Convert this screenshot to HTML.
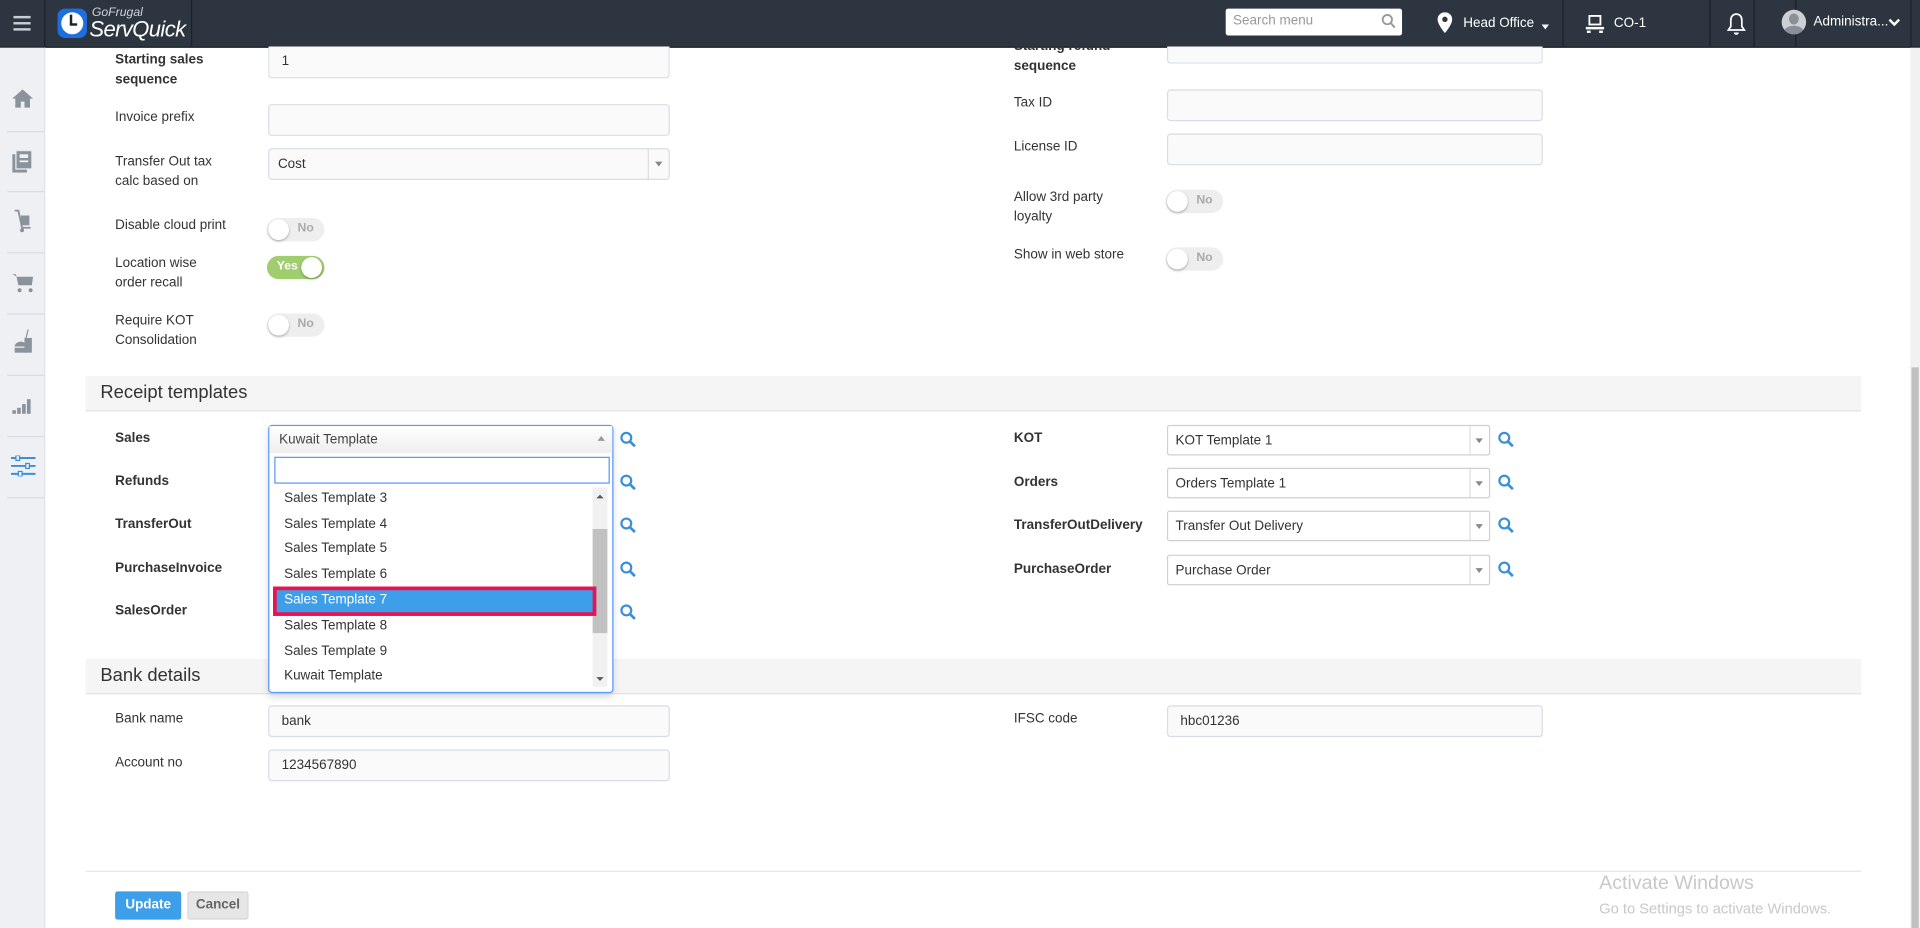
<!DOCTYPE html>
<html><head><meta charset="utf-8">
<style>
html,body{margin:0;padding:0;width:1920px;height:928px;overflow:hidden;background:#fff;}
#w{position:absolute;left:0;top:0;width:1568px;height:758px;transform:scale(1.22449);transform-origin:0 0;font-family:"Liberation Sans",Arial,sans-serif;font-size:11px;color:#333;}
.a{position:absolute;}
.hdr{left:0;top:0;width:1568px;height:38px;background:#2d3640;border-bottom:1px solid #1b2128;}
.side{left:0;top:39px;width:36px;height:719px;background:#eef0f4;border-right:1px solid #e0e3e8;}
.lbl{position:absolute;font-size:11px;line-height:16px;color:#333;}
.b{font-weight:bold;}
.inp{position:absolute;height:24px;border:1px solid #d5dee8;border-radius:3px;background:#fafafa;font-size:11px;line-height:24px;padding-left:10px;box-sizing:border-box;height:26px;}
.tog{position:absolute;width:47px;height:19px;border-radius:10px;background:#eee;box-sizing:border-box;}
.tog .k{position:absolute;left:1px;top:1px;width:17px;height:17px;border-radius:50%;background:#fff;box-shadow:0 1px 2px rgba(0,0,0,.3);}
.tog .t{position:absolute;left:25px;top:3px;font-size:10px;color:#aaa;font-weight:bold;}
.sec{position:absolute;left:70px;width:1450px;height:29px;background:#f5f5f5;border-bottom:1px solid #e3e3e3;font-size:15px;line-height:28px;padding-left:12px;box-sizing:border-box;color:#333;}
.sel{position:absolute;height:25px;border:1px solid #d0d0d0;border-radius:2px;background:#fff;font-size:11px;line-height:24px;padding-left:6px;box-sizing:border-box;width:264px;}
.sel .ar{position:absolute;right:0;top:0;width:15px;height:23px;border-left:1px solid #ddd;}
.sel .ar:after{content:"";position:absolute;left:4px;top:10px;border:3px solid transparent;border-top:4px solid #888;}
.mg{position:absolute;width:14px;height:14px;}
.opt{position:absolute;left:12px;font-size:11px;line-height:21px;color:#333;}
.sep{position:absolute;left:6px;width:30px;height:1px;background:#d8dce2;}
</style></head><body><div id="w">
<div class="a hdr">
  <div class="a" style="left:0;top:0;width:36px;height:38px;border-right:1px solid #1b2128;">
    <div class="a" style="left:11px;top:13px;width:14px;height:2px;background:#c9ced4"></div>
    <div class="a" style="left:11px;top:18px;width:14px;height:2px;background:#c9ced4"></div>
    <div class="a" style="left:11px;top:23px;width:14px;height:2px;background:#c9ced4"></div>
  </div>
  <div class="a" style="left:156px;top:0;width:1px;height:38px;background:#1b2128"></div>
  <div class="a" style="left:47px;top:7px;width:24px;height:24px;border-radius:6px;background:#1d6fe0"></div>
  <div class="a" style="left:50px;top:10px;width:18px;height:18px;border-radius:50%;background:#fff"></div>
  <div class="a" style="left:57px;top:12px;width:2px;height:8px;background:#222"></div>
  <div class="a" style="left:57px;top:19px;width:6px;height:2px;background:#222"></div>
  <div class="a" style="left:75px;top:5px;font-size:10px;font-style:italic;color:#cfd4da">GoFrugal</div>
  <div class="a" style="left:73px;top:14px;font-size:18px;font-style:italic;color:#fff;letter-spacing:-0.5px">ServQuick</div>
  <div class="a" style="left:1001px;top:7px;width:144px;height:22px;background:#fff;border-radius:2px;">
    <div class="a" style="left:6px;top:4px;color:#999;font-size:11px">Search menu</div>
    <svg class="a" style="left:127px;top:4px" width="12" height="13" viewBox="0 0 12 13"><circle cx="5" cy="5" r="3.8" fill="none" stroke="#999" stroke-width="1.5"/><path d="M8 8l3 3.5" stroke="#999" stroke-width="1.6"/></svg>
  </div>
  <svg class="a" style="left:1174px;top:10px" width="12" height="17" viewBox="0 0 12 17"><path d="M6 0C2.7 0 0 2.6 0 5.8 0 10 6 17 6 17s6-7 6-11.2C12 2.6 9.3 0 6 0z" fill="#fff"/><circle cx="6" cy="5.8" r="2.2" fill="#2d3640"/></svg>
  <div class="a" style="left:1195px;top:13px;color:#fff;font-size:11px">Head Office</div>
  <div class="a" style="left:1259px;top:20px;border:3px solid transparent;border-top:4px solid #fff"></div>
  <div class="a" style="left:1466px;top:0;width:1px;height:38px;background:#1b2128"></div>
  <div class="a" style="left:1276px;top:0;width:1px;height:38px;background:#1b2128"></div>
  <svg class="a" style="left:1295px;top:12px" width="16" height="15" viewBox="0 0 16 15"><rect x="3" y="1" width="9" height="7" fill="none" stroke="#fff" stroke-width="1.5"/><rect x="0" y="10" width="15" height="2" fill="#fff"/><rect x="1" y="13" width="3" height="2" fill="#fff"/><rect x="11" y="13" width="3" height="2" fill="#fff"/></svg>
  <div class="a" style="left:1318px;top:13px;color:#fff;font-size:11px">CO-1</div>
  <div class="a" style="left:1396px;top:0;width:1px;height:38px;background:#1b2128"></div>
  <div class="a" style="left:1432px;top:0;width:1px;height:38px;background:#1b2128"></div>
  <svg class="a" style="left:1410px;top:10px" width="16" height="19" viewBox="0 0 16 19"><path d="M8 1.5c-3 0-4.5 2.3-4.5 5v5L1.5 14.5h13L12.5 11.5v-5c0-2.7-1.5-5-4.5-5z" fill="none" stroke="#fff" stroke-width="1.4"/><path d="M6 16.5a2 2 0 004 0z" fill="#fff"/></svg>
  <div class="a" style="left:1455px;top:8px;width:20px;height:20px;border-radius:50%;background:#ccd0d5;overflow:hidden">
    <div class="a" style="left:6px;top:3px;width:8px;height:9px;border-radius:50%;background:#8a9099"></div>
    <div class="a" style="left:2px;top:13px;width:16px;height:10px;border-radius:50%;background:#8a9099"></div>
  </div>
  <div class="a" style="left:1481px;top:12px;color:#fff;font-size:11px">Administra...</div>
  <svg class="a" style="left:1542px;top:15px" width="10" height="7" viewBox="0 0 10 7"><path d="M1 1l4 4 4-4" stroke="#fff" stroke-width="2" fill="none"/></svg>
  <div class="a" style="left:1560px;top:0;width:1px;height:38px;background:#1b2128"></div>
</div>

<div class="a side">
  <svg class="a" style="left:10px;top:34px" width="17" height="15" viewBox="0 0 17 15"><path d="M8.5 0L0 7.5h2.5V15h4.5v-5h3v5h4.5V7.5H17z" fill="#8a929c"/></svg>
  <div class="sep" style="top:68px"></div>
  <svg class="a" style="left:10px;top:84px" width="16" height="18" viewBox="0 0 16 18"><rect x="0" y="3" width="12" height="15" fill="#8a929c"/><rect x="3" y="0" width="13" height="15" fill="#8a929c" stroke="#eef0f4"/><rect x="6" y="3" width="7" height="3" fill="#eef0f4"/><rect x="6" y="8" width="7" height="1.5" fill="#eef0f4"/></svg>
  <div class="sep" style="top:117px"></div>
  <svg class="a" style="left:11px;top:132px" width="16" height="20" viewBox="0 0 16 20"><path d="M1 1h3l3 14h7" stroke="#8a929c" stroke-width="1.5" fill="none"/><rect x="6" y="5" width="7" height="8" fill="#8a929c"/><circle cx="7" cy="17" r="1.6" fill="#8a929c"/></svg>
  <div class="sep" style="top:167px"></div>
  <svg class="a" style="left:10px;top:184px" width="18" height="16" viewBox="0 0 18 16"><path d="M0 1h3l2 9h11l1-7H4" fill="#8a929c"/><circle cx="6" cy="14" r="1.6" fill="#8a929c"/><circle cx="15" cy="14" r="1.6" fill="#8a929c"/></svg>
  <div class="sep" style="top:217px"></div>
  <svg class="a" style="left:11px;top:230px" width="16" height="20" viewBox="0 0 16 20"><path d="M10 8l2-8" stroke="#8a929c" stroke-width="1"/><rect x="9" y="7" width="6" height="12" fill="#8a929c"/><path d="M1 14a5 4 0 0110 0z" fill="#8a929c"/><rect x="1" y="15" width="10" height="4" fill="#8a929c"/></svg>
  <div class="sep" style="top:267px"></div>
  <svg class="a" style="left:10px;top:283px" width="18" height="16" viewBox="0 0 18 16"><rect x="0" y="13" width="3" height="3" fill="#8a929c"/><rect x="4" y="11" width="3" height="5" fill="#8a929c"/><rect x="8" y="8" width="3" height="8" fill="#8a929c"/><rect x="12" y="4" width="3" height="12" fill="#8a929c"/></svg>
  <div class="sep" style="top:317px"></div>
  <svg class="a" style="left:9px;top:333px" width="20" height="17" viewBox="0 0 20 17"><path d="M0 2h20M0 8.5h20M0 15h20" stroke="#3a8fd8" stroke-width="1.6"/><rect x="4" y="0" width="3" height="4" fill="#eef0f4" stroke="#3a8fd8"/><rect x="12" y="6.5" width="3" height="4" fill="#eef0f4" stroke="#3a8fd8"/><rect x="6" y="13" width="3" height="4" fill="#eef0f4" stroke="#3a8fd8"/></svg>
  <div class="sep" style="top:367px"></div>
</div>

<!-- top form -->
<div class="lbl b" style="left:94px;top:41px">Starting sales<br>sequence</div>
<div class="inp" style="left:219px;top:38px;width:328px;border-top:none;border-radius:0 0 3px 3px">1</div>
<div class="lbl" style="left:94px;top:88px">Invoice prefix</div>
<div class="inp" style="left:219px;top:85px;width:328px"></div>
<div class="lbl" style="left:94px;top:124px">Transfer Out tax<br>calc based on</div>
<div class="inp" style="left:219px;top:121px;width:328px;padding-left:7px">Cost<div class="a" style="right:0;top:0;width:16px;height:24px;border-left:1px solid #ddd"></div><div class="a" style="right:5px;top:10px;border:3px solid transparent;border-top:4px solid #888"></div></div>
<div class="lbl" style="left:94px;top:176px">Disable cloud print</div>
<div class="tog" style="left:218px;top:178px"><div class="k"></div><div class="t">No</div></div>
<div class="lbl" style="left:94px;top:207px">Location wise<br>order recall</div>
<div class="tog" style="left:218px;top:209px;background:#a0ce6f"><div class="k" style="left:28px"></div><div class="t" style="left:8px;color:#fff">Yes</div></div>
<div class="lbl" style="left:94px;top:254px">Require KOT<br>Consolidation</div>
<div class="tog" style="left:218px;top:256px"><div class="k"></div><div class="t">No</div></div>

<div class="lbl b" style="left:828px;top:30px;clip-path:inset(8px 0 0 0)">Starting refund<br>sequence</div>
<div class="inp" style="left:953px;top:38px;width:307px;height:14px;border-top:none;border-radius:0 0 3px 3px"></div>
<div class="lbl" style="left:828px;top:76px">Tax ID</div>
<div class="inp" style="left:953px;top:73px;width:307px"></div>
<div class="lbl" style="left:828px;top:112px">License ID</div>
<div class="inp" style="left:953px;top:109px;width:307px"></div>
<div class="lbl" style="left:828px;top:153px">Allow 3rd party<br>loyalty</div>
<div class="tog" style="left:952px;top:155px"><div class="k"></div><div class="t">No</div></div>
<div class="lbl" style="left:828px;top:200px">Show in web store</div>
<div class="tog" style="left:952px;top:202px"><div class="k"></div><div class="t">No</div></div>

<div class="sec" style="top:307px">Receipt templates</div>

<div class="lbl b" style="left:94px;top:350px">Sales</div>
<div class="lbl b" style="left:94px;top:385px">Refunds</div>
<div class="lbl b" style="left:94px;top:420px">TransferOut</div>
<div class="lbl b" style="left:94px;top:456px">PurchaseInvoice</div>
<div class="lbl b" style="left:94px;top:491px">SalesOrder</div>

<svg class="mg" style="left:506px;top:352px" viewBox="0 0 14 14"><circle cx="5.5" cy="5.5" r="4" fill="none" stroke="#3a8fd8" stroke-width="1.8"/><path d="M8.5 8.5l4 4" stroke="#3a8fd8" stroke-width="2.2"/></svg>
<svg class="mg" style="left:506px;top:387px" viewBox="0 0 14 14"><circle cx="5.5" cy="5.5" r="4" fill="none" stroke="#3a8fd8" stroke-width="1.8"/><path d="M8.5 8.5l4 4" stroke="#3a8fd8" stroke-width="2.2"/></svg>
<svg class="mg" style="left:506px;top:422px" viewBox="0 0 14 14"><circle cx="5.5" cy="5.5" r="4" fill="none" stroke="#3a8fd8" stroke-width="1.8"/><path d="M8.5 8.5l4 4" stroke="#3a8fd8" stroke-width="2.2"/></svg>
<svg class="mg" style="left:506px;top:458px" viewBox="0 0 14 14"><circle cx="5.5" cy="5.5" r="4" fill="none" stroke="#3a8fd8" stroke-width="1.8"/><path d="M8.5 8.5l4 4" stroke="#3a8fd8" stroke-width="2.2"/></svg>
<svg class="mg" style="left:506px;top:493px" viewBox="0 0 14 14"><circle cx="5.5" cy="5.5" r="4" fill="none" stroke="#3a8fd8" stroke-width="1.8"/><path d="M8.5 8.5l4 4" stroke="#3a8fd8" stroke-width="2.2"/></svg>

<div class="lbl b" style="left:828px;top:350px">KOT</div>
<div class="lbl b" style="left:828px;top:386px">Orders</div>
<div class="lbl b" style="left:828px;top:421px">TransferOutDelivery</div>
<div class="lbl b" style="left:828px;top:457px">PurchaseOrder</div>
<div class="sel" style="left:953px;top:347px">KOT Template 1<div class="ar"></div></div>
<div class="sel" style="left:953px;top:382px">Orders Template 1<div class="ar"></div></div>
<div class="sel" style="left:953px;top:417px">Transfer Out Delivery<div class="ar"></div></div>
<div class="sel" style="left:953px;top:453px">Purchase Order<div class="ar"></div></div>
<svg class="mg" style="left:1223px;top:352px" viewBox="0 0 14 14"><circle cx="5.5" cy="5.5" r="4" fill="none" stroke="#3a8fd8" stroke-width="1.8"/><path d="M8.5 8.5l4 4" stroke="#3a8fd8" stroke-width="2.2"/></svg>
<svg class="mg" style="left:1223px;top:387px" viewBox="0 0 14 14"><circle cx="5.5" cy="5.5" r="4" fill="none" stroke="#3a8fd8" stroke-width="1.8"/><path d="M8.5 8.5l4 4" stroke="#3a8fd8" stroke-width="2.2"/></svg>
<svg class="mg" style="left:1223px;top:422px" viewBox="0 0 14 14"><circle cx="5.5" cy="5.5" r="4" fill="none" stroke="#3a8fd8" stroke-width="1.8"/><path d="M8.5 8.5l4 4" stroke="#3a8fd8" stroke-width="2.2"/></svg>
<svg class="mg" style="left:1223px;top:458px" viewBox="0 0 14 14"><circle cx="5.5" cy="5.5" r="4" fill="none" stroke="#3a8fd8" stroke-width="1.8"/><path d="M8.5 8.5l4 4" stroke="#3a8fd8" stroke-width="2.2"/></svg>

<div class="sec" style="top:538px">Bank details</div>
<div class="lbl" style="left:94px;top:579px">Bank name</div>
<div class="inp" style="left:219px;top:576px;width:328px">bank</div>
<div class="lbl" style="left:94px;top:615px">Account no</div>
<div class="inp" style="left:219px;top:612px;width:328px">1234567890</div>
<div class="lbl" style="left:828px;top:579px">IFSC code</div>
<div class="inp" style="left:953px;top:576px;width:307px">hbc01236</div>

<!-- dropdown -->
<div class="a" style="left:219px;top:347px;width:282px;height:219px;border:1px solid #5897fb;border-radius:3px;background:#fff;box-shadow:0 3px 6px rgba(0,0,0,.15);box-sizing:border-box">
  <div class="a" style="left:0;top:0;width:280px;height:22px;background:linear-gradient(#fff,#eee);font-size:11px;line-height:22px;padding-left:8px;box-sizing:border-box;color:#444">Kuwait Template</div>
  <div class="a" style="left:268px;top:8px;border:3px solid transparent;border-bottom:4px solid #999;border-top:none"></div>
  <div class="a" style="left:4px;top:25px;width:274px;height:22px;border:1px solid #5897fb;box-sizing:border-box"></div>
  <div class="a" style="left:264px;top:50px;width:12px;height:163px;background:#f1f1f1"></div>
  <div class="a" style="left:264px;top:84px;width:12px;height:85px;background:#c1c1c1"></div>
  <div class="a" style="left:267px;top:56px;border:3px solid transparent;border-bottom:3px solid #555;border-top:none"></div>
  <div class="a" style="left:267px;top:205px;border:3px solid transparent;border-top:3px solid #555;border-bottom:none"></div>
  <div class="opt" style="top:49px">Sales Template 3</div>
  <div class="opt" style="top:70px">Sales Template 4</div>
  <div class="opt" style="top:90px">Sales Template 5</div>
  <div class="opt" style="top:111px">Sales Template 6</div>
  <div class="a" style="left:3px;top:131px;width:264px;height:24px;border:3px solid #f0104f;box-sizing:border-box;background:#3d9ee9"></div>
  <div class="opt" style="top:132px;color:#fff">Sales Template 7</div>
  <div class="opt" style="top:153px">Sales Template 8</div>
  <div class="opt" style="top:174px">Sales Template 9</div>
  <div class="opt" style="top:194px">Kuwait Template</div>
</div>

<div class="a" style="left:70px;top:711px;width:1450px;height:1px;background:#e5e5e5"></div>
<div class="a" style="left:94px;top:728px;width:54px;height:23px;background:#3d9ee9;border-radius:2px;color:#fff;font-weight:bold;font-size:11px;line-height:23px;text-align:center">Update</div>
<div class="a" style="left:153px;top:728px;width:50px;height:23px;background:#e6e6e6;border:1px solid #d8d8d8;box-sizing:border-box;border-radius:2px;color:#666;font-weight:bold;font-size:11px;line-height:21px;text-align:center">Cancel</div>

<div class="a" style="left:1306px;top:713px;font-size:16px;color:#c8c8c8">Activate Windows</div>
<div class="a" style="left:1306px;top:735px;font-size:12px;color:#c8c8c8">Go to Settings to activate Windows.</div>

<div class="a" style="left:1560px;top:39px;width:8px;height:719px;background:#f1f1f1"></div>
<div class="a" style="left:1561px;top:300px;width:6px;height:458px;background:#c1c1c1"></div>
</div></body></html>
